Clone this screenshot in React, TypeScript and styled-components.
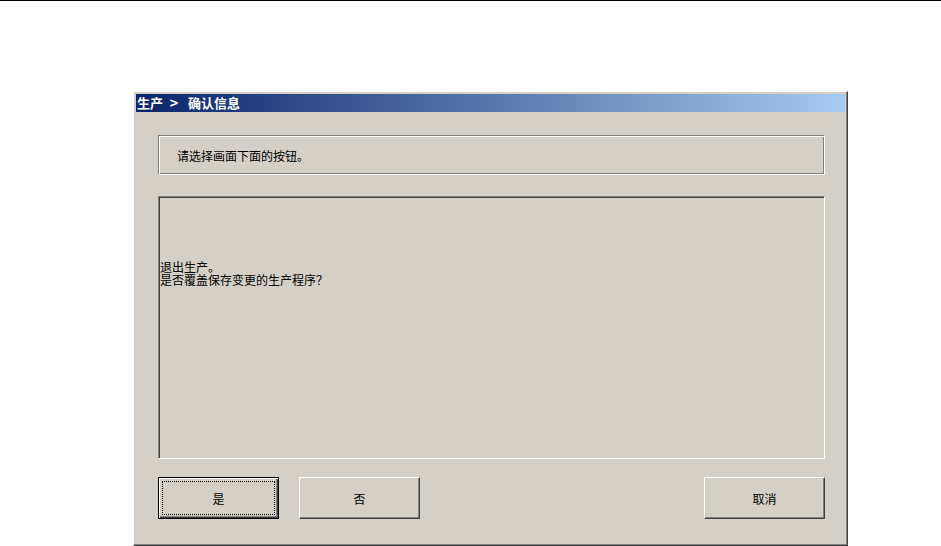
import styled, { createGlobalStyle } from 'styled-components';

const GlobalStyle = createGlobalStyle`
  html, body {
    margin: 0;
    padding: 0;
    background: #ffffff;
  }
  body {
    font-family: "Noto Sans CJK SC", "Liberation Sans", sans-serif;
    font-size: 12px;
    color: #000;
  }
`;

const App = () => {
    return (
        <>
            <GlobalStyle />
            <Page>
                <TopRule />
                <Dialog>
                    <TitleBar>
                        生产<Chevron>&gt;</Chevron>确认信息
                    </TitleBar>
                    <Body>
                        <HintBox>请选择画面下面的按钮。</HintBox>
                        <MessageBox>
                            <Line>退出生产。</Line>
                            <Line>是否覆盖保存变更的生产程序？</Line>
                        </MessageBox>
                        <ButtonRow>
                            <Button $default>
                                <FocusRect>是</FocusRect>
                            </Button>
                            <Button>否</Button>
                            <Spacer />
                            <Button>取消</Button>
                        </ButtonRow>
                    </Body>
                </Dialog>
            </Page>
        </>
    );
};

export default App;

// Styled Components
const Page = styled.div`
  width: 941px;
  height: 546px;
  overflow: hidden;
`;

const TopRule = styled.div`
  height: 1px;
  background: #000;
`;

const Dialog = styled.div`
  margin: 90px 0 0 133px;
  width: 715px;
  height: 455px;
  box-sizing: border-box;
  padding: 2px;
  background: #d4d0c8;
  border: 1px solid;
  border-color: #ffffff #404040 #404040 #ffffff;
  box-shadow: inset -1px -1px #808080, inset 1px 1px #d4d0c8;
  display: flex;
  flex-direction: column;
`;

const TitleBar = styled.div`
  height: 18px;
  line-height: 18px;
  padding-left: 1px;
  background: linear-gradient(to right, #0a246a, #a6caf0);
  color: #fff;
  font-weight: bold;
  font-size: 13px;
  white-space: nowrap;
  display: flex;
  align-items: center;
`;

const Chevron = styled.span`
  margin: 0 9px 0 6px;
  font-family: "DejaVu Sans", sans-serif;
  font-size: 12px;
`;

const Body = styled.div`
  flex: 1;
  padding: 23px 20px 0 22px;
  display: flex;
  flex-direction: column;
`;

const HintBox = styled.div`
  height: 40px;
  box-sizing: border-box;
  display: flex;
  align-items: center;
  padding-left: 18px;
  border: 1px solid;
  border-color: #808080 #ffffff #ffffff #808080;
  box-shadow: inset 1px 1px #ffffff, inset -1px -1px #808080;
`;

const MessageBox = styled.div`
  margin-top: 21px;
  height: 263px;
  box-sizing: border-box;
  padding: 63px 0 0 1px;
  border: 1px solid;
  border-color: #808080 #ffffff #ffffff #808080;
  box-shadow: inset 1px 1px #404040, inset -1px -1px #d4d0c8;
`;

const Line = styled.div`
  line-height: 13px;
  white-space: nowrap;
`;

const ButtonRow = styled.div`
  margin-top: 18px;
  display: flex;
  gap: 20px;
`;

const Spacer = styled.div`
  flex: 1;
`;

const Button = styled.button<{ $default?: boolean }>`
  width: 121px;
  height: 42px;
  box-sizing: border-box;
  margin: 0;
  padding: ${p => (p.$default ? '3px' : '0')};
  background: #d4d0c8;
  font-family: "Noto Sans CJK SC", "Liberation Sans", sans-serif;
  font-size: 12px;
  color: #000;
  border: 1px solid;
  border-color: ${p => (p.$default ? '#000' : '#ffffff #404040 #404040 #ffffff')};
  box-shadow: ${p =>
      p.$default
          ? 'inset 1px 1px #ffffff, inset -1px -1px #404040, inset -2px -2px #808080'
          : 'inset -1px -1px #808080'};
  display: flex;
  align-items: center;
  justify-content: center;
`;

const FocusRect = styled.span`
  flex: 1;
  align-self: stretch;
  display: flex;
  align-items: center;
  justify-content: center;
  border: 1px dotted #000;
`;
